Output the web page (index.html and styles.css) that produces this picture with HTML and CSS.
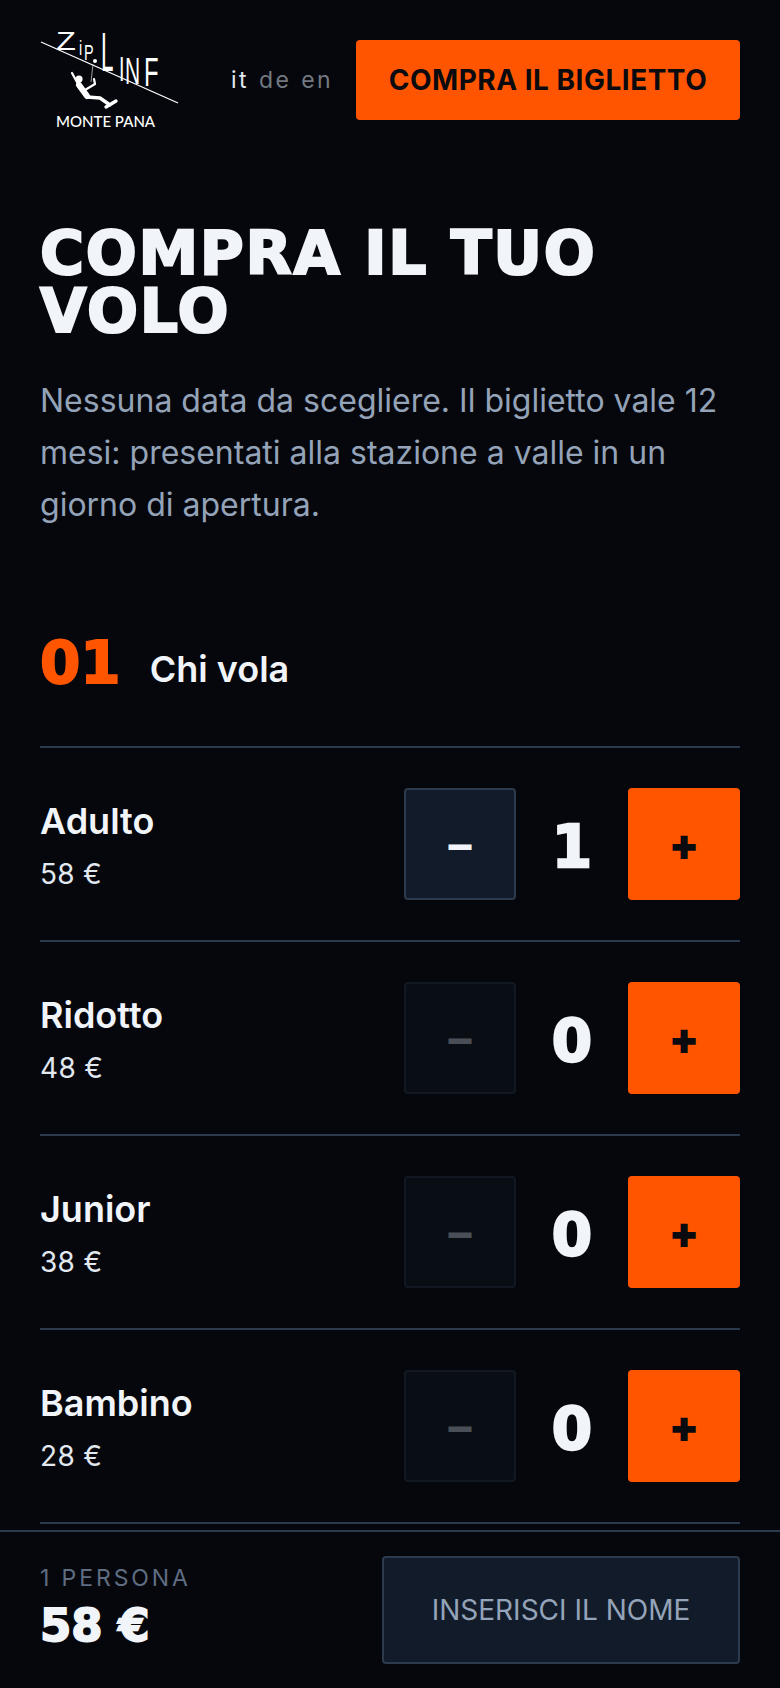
FILE: index.html
```html
<!DOCTYPE html>
<html lang="it">
<head>
<meta charset="utf-8">
<title>Compra il tuo volo</title>
<link rel="stylesheet" href="styles.css">
</head>
<body>
<div class="page">
  <main class="main">
    <header class="topbar">
      <svg class="logo" viewBox="40 30 140 100" aria-label="Zip Line Monte Pana">
        <line class="wire" x1="41" y1="42" x2="178" y2="103"/>
        <text class="logo-thin" transform="translate(56 50) scale(1.3 1)" font-size="25">Z</text>
        <text class="logo-thin" transform="translate(79 55) scale(.9 1.3)" font-size="16">i</text>
        <text class="logo-thin" transform="translate(84 60) scale(.9 1.4)" font-size="16">P</text>
        <text class="logo-thin" transform="translate(101 71) scale(.8 1.95)" font-size="28">L</text>
        <text class="logo-thin" transform="translate(119 81) scale(.7 1.25)" font-size="28">I</text>
        <text class="logo-thin" transform="translate(125 84) scale(.75 1.35)" font-size="28">N</text>
        <text class="logo-thin" transform="translate(144 86) scale(.85 1.42)" font-size="28">F</text>
        <path class="limb limb-thin" d="M72 73L78 84M85 90L95 84L94 79"/>
        <path class="limb limb-wide" d="M79 85L87 96"/>
        <path class="limb" d="M87 97L100 98L110 105M106 107L116 101"/>
        <circle class="man" cx="79" cy="79" r="3.6"/>
        <line class="rope" x1="93" y1="64" x2="91" y2="82"/>
        <circle class="man" cx="95" cy="61" r="2"/>
        <text class="logo-name" x="56" y="127">MONTE PANA</text>
      </svg>
      <nav class="langs">
        <span class="lang lang-on">it</span>
        <span class="lang">de</span>
        <span class="lang">en</span>
      </nav>
      <a class="buy">COMPRA IL BIGLIETTO</a>
    </header>

    <section class="intro">
      <h1 class="title">COMPRA IL TUO VOLO</h1>
      <p class="lead">Nessuna data da scegliere. Il biglietto vale 12 mesi: presentati alla stazione a valle in un giorno di apertura.</p>
    </section>

    <section class="step">
      <div class="step-head">
        <span class="step-num">01</span>
        <h2 class="step-title">Chi vola</h2>
      </div>
      <div class="row">
        <div class="info"><div class="name">Adulto</div><div class="price">58 €</div></div>
        <div class="stepper">
          <button class="btn minus">–</button>
          <span class="count">1</span>
          <button class="btn plus">+</button>
        </div>
      </div>
      <div class="row">
        <div class="info"><div class="name">Ridotto</div><div class="price">48 €</div></div>
        <div class="stepper">
          <button class="btn minus off">–</button>
          <span class="count">0</span>
          <button class="btn plus">+</button>
        </div>
      </div>
      <div class="row">
        <div class="info"><div class="name">Junior</div><div class="price">38 €</div></div>
        <div class="stepper">
          <button class="btn minus off">–</button>
          <span class="count">0</span>
          <button class="btn plus">+</button>
        </div>
      </div>
      <div class="row">
        <div class="info"><div class="name">Bambino</div><div class="price">28 €</div></div>
        <div class="stepper">
          <button class="btn minus off">–</button>
          <span class="count">0</span>
          <button class="btn plus">+</button>
        </div>
      </div>
    </section>
  </main>

  <footer class="bar">
    <div class="sum">
      <div class="sum-label">1 PERSONA</div>
      <div class="sum-total">58 €</div>
    </div>
    <button class="next">INSERISCI IL NOME</button>
  </footer>
</div>
</body>
</html>
```

FILE: styles.css
```css
* { box-sizing: border-box; }
html, body { margin: 0; padding: 0; height: 100%; }
body {
  background: #05070d;
  color: #f1f5f9;
  font-family: Inter, "Liberation Sans", sans-serif;
}
.page { height: 100vh; display: flex; flex-direction: column; overflow: hidden; }
.main { flex: 1; min-height: 0; overflow: hidden; padding: 0 40px; }

.topbar { display: flex; align-items: center; height: 160px; }
.logo { width: 140px; height: 100px; flex: none; overflow: visible; }
.wire { stroke: #fff; stroke-width: 1.3; }
.rope { stroke: #ddd; stroke-width: .7; }
.man { fill: #fff; }
.limb { fill: none; stroke: #fff; stroke-width: 3.4; stroke-linecap: round; stroke-linejoin: round; }
.limb-thin { stroke-width: 2.2; }
.limb-wide { stroke-width: 6; }
.logo-thin { fill: #fff; font-family: "Liberation Sans", sans-serif; font-weight: 400; }
.logo-name { fill: #fff; font-family: Lato, sans-serif; font-size: 15px; font-weight: 500; }
.langs { display: flex; gap: 10px; margin-left: 51px; font-size: 23px; letter-spacing: 2.4px; }
.lang { color: #737980; }
.lang-on { color: #e2e8f0; }
.buy {
  margin-left: auto;
  width: 384px; height: 80px;
  display: flex; align-items: center; justify-content: center;
  background: #ff5500; color: #0a0a0f;
  border-radius: 4px;
  font-size: 28px; font-weight: 700; letter-spacing: .5px;
}

.intro { padding-top: 64px; }
.title {
  margin: 0;
  font-family: "DejaVu Sans", sans-serif;
  font-size: 60px; line-height: 58px; font-weight: 700;
  letter-spacing: 1.7px;
  color: #f1f5f9;
  width: 640px;
  -webkit-text-stroke: 2.2px #f1f5f9;
}
.lead { margin: 35px 0 0; font-size: 32px; line-height: 52px; color: #94a3b8; }

.step { margin-top: 102px; }
.step-head { display: flex; align-items: center; gap: 29px; height: 60px; margin-bottom: 53px; }
.step-num {
  font-family: "DejaVu Sans", sans-serif;
  font-size: 58px; font-weight: 700; color: #ff5500; line-height: 60px;
  -webkit-text-stroke: 2px #ff5500;
}
.step-title { margin: 11px 0 0; font-size: 36px; font-weight: 600; color: #f1f5f9; }

.row {
  display: flex; align-items: center; justify-content: space-between;
  height: 194px;
  border-top: 2px solid #2c3a4d;
}
.row:last-child { border-bottom: 2px solid #2c3a4d; height: 196px; }
.info { padding-top: 3px; }
.name { font-size: 36px; font-weight: 600; line-height: 44px; color: #f1f5f9; }
.price { margin-top: 13px; font-size: 28px; line-height: 36px; color: #e2e8f0; letter-spacing: .3px; }

.stepper { display: flex; align-items: center; }
.btn {
  width: 112px; height: 112px; padding: 0;
  border-radius: 4px;
  font-family: Inter, sans-serif; line-height: 1;
  display: flex; align-items: center; justify-content: center;
}
.minus { background: #111b29; border: 2px solid #2c3a4d; color: #f1f5f9; font-size: 46px; font-weight: 700; }
.minus.off { background: #090d14; border-color: #121821; color: #4a4f57; }
.plus { background: #ff5500; border: 0; color: #0a0a0f; font-size: 44px; font-weight: 900; }
.count {
  width: 112px; padding-top: 6px; text-align: center;
  font-family: "DejaVu Sans", sans-serif; font-weight: 700; font-size: 58px; line-height: 1;
  -webkit-text-stroke: 2.4px #f1f5f9;
}

.bar {
  flex: none; height: 158px;
  display: flex; align-items: center; justify-content: space-between;
  padding: 24px 40px 24px;
  border-top: 2px solid #2c3a4d;
  background: #05070d;
}
.sum-label { margin-top: -6px; font-size: 23px; line-height: 30px; letter-spacing: 2.9px; color: #5f6d82; }
.sum-total {
  margin-top: 8px;
  font-family: "DejaVu Sans", sans-serif; font-weight: 700; font-size: 45px; line-height: 50px;
  -webkit-text-stroke: 1.8px #f1f5f9;
}
.next {
  width: 358px; height: 108px;
  background: #111b29; border: 2px solid #2c3a4d; border-radius: 4px;
  color: #94a3b8;
  font-family: Inter, sans-serif; font-size: 28px; font-weight: 400;
}
```
